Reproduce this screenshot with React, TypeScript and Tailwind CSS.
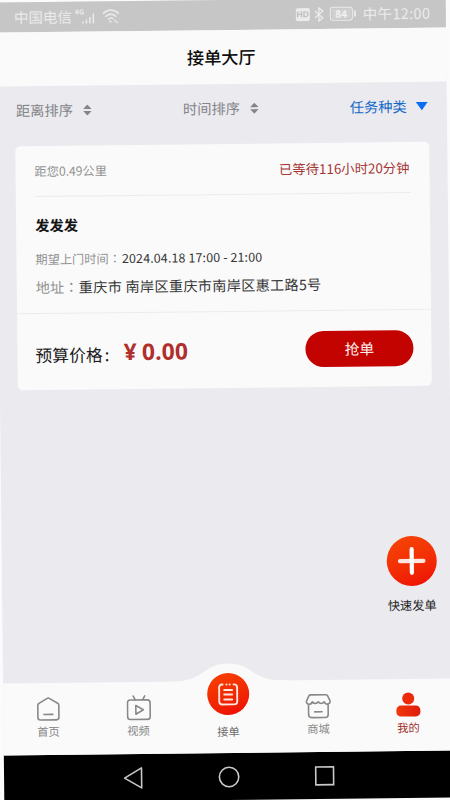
import type { ReactNode } from "react";

function StatusBar() {
  return (
    <div className="flex h-[30px] items-center bg-[#c6c6c6] pl-[18px] pr-[15.500px] text-[#ebebeb]">
      <span className="text-[14.5px] leading-none">中国电信</span>
      <span className="ml-[3px] mb-[9px] text-[7px] font-bold leading-none">4G</span>
      <svg className="-ml-[2px] mt-px" width="13" height="14" viewBox="0 0 13 14" stroke="currentColor" strokeWidth="1.5">
        <path d="M1 13v-2M4.500 13V9M8 13V6.500M11.500 13V3" />
      </svg>
      <svg className="ml-[7px]" width="18" height="16" viewBox="0 0 18 16" fill="none" stroke="currentColor" strokeWidth="1.5">
        <path d="M1 5.500C6 .7 12 .7 17 5.500M3.500 8.500C7 5.200 11 5.200 14.500 8.500M6 11.200c2-1.700 4-1.700 5.500-.4" />
        <path d="M7.500 13.300h2" strokeWidth="2" />
        <path d="m12 13 1-1.500L14 13zM14 13.500h2l-1 1.500z" fill="currentColor" strokeWidth=".5" />
      </svg>
      <span className="ml-auto flex h-[13px] w-[14px] items-center justify-center rounded-[2px] bg-[#ebebeb] font-['Liberation_Sans',sans-serif] text-[8.500px] font-bold leading-none text-[#bdbdbd]">HD</span>
      <svg className="ml-[4px]" width="11" height="15" viewBox="0 0 11 15" fill="none" stroke="currentColor" strokeWidth="1.3">
        <path d="m1 4 8 7-4 3V1l4 3-8 7" />
      </svg>
      <span className="ml-[5px] flex h-[14px] w-[23px] items-center justify-center rounded-[3px] border-[1.500px] border-[#ebebeb] p-px text-[10px] font-bold leading-none text-[#f2f2f2]">
        <span className="flex h-full w-full items-center justify-center bg-[#d0d0d0]">84</span>
      </span>
      <span className="ml-[1.500px] h-[6px] w-[1.500px] bg-[#ebebeb]" />
      <span className="ml-[7px] text-[14.5px] leading-none tracking-[0.35px]">中午12:00</span>
    </div>
  );
}

function SortArrows() {
  return (
    <svg className="mt-px" width="9" height="11" viewBox="0 0 9 11" fill="#858589">
      <path d="M4.500 0 8.700 4.500H.3zM4.500 11 8.700 6.500H.3z" />
    </svg>
  );
}

function FilterBar() {
  return (
    <div className="flex h-[48px] items-center pl-[19px] pr-[19px] text-[14.3px] leading-none text-[#858589]">
      <div className="flex w-[167px] items-center gap-[9.500px]">
        <span>距离排序</span>
        <SortArrows />
      </div>
      <div className="flex items-center gap-[9.500px]">
        <span>时间排序</span>
        <SortArrows />
      </div>
      <div className="ml-auto flex items-center gap-[9px] text-[#1469c7]">
        <span>任务种类</span>
        <svg className="mt-px" width="12" height="9" viewBox="0 0 12 9" fill="#0b6ef0">
          <path d="M0 0h12L6 8.500z" />
        </svg>
      </div>
    </div>
  );
}

function Colon() {
  return <span className="font-['Noto_Sans_CJK_TC',sans-serif]" lang="zh-TW">：</span>;
}

function OrderCard() {
  return (
    <section className="mx-[18px] mt-[12px] h-[244px] rounded-[5px] bg-[#fafafa]">
      <div className="mx-[19px] flex h-[51px] items-center justify-between border-b border-[#ececec] leading-none">
        <span className="text-[12.2px] text-[#929292]">距您0.49公里</span>
        <span className="mr-[1px] mt-[2px] text-[13.3px] tracking-[0.04px] text-[#a43735]">已等待116小时20分钟</span>
      </div>
      <div className="h-[117px] border-b border-[#ececec] px-[19px] pt-[20px]">
        <h2 className="text-[14.3px] font-bold leading-[16px] text-[#141414]">发发发</h2>
        <div className="mt-[19px] flex h-[14px] items-center leading-none">
          <span className="w-[86.500px] whitespace-nowrap text-[12.2px] text-[#929292]">期望上门时间<Colon /></span>
          <span className="whitespace-nowrap text-[12.5px] tracking-[0.11px] text-[#363636]">2024.04.18 17:00 - 21:00</span>
        </div>
        <div className="mt-[13px] flex h-[16px] items-center text-[14.2px] leading-none">
          <span className="w-[43px] whitespace-nowrap text-[#929292]">地址<Colon /></span>
          <span className="whitespace-nowrap tracking-[0.26px] text-[#363636]">重庆市 南岸区重庆市南岸区惠工路5号</span>
        </div>
      </div>
      <div className="flex h-[76px] items-center pl-[18px] pr-[18px] leading-none">
        <span className="mt-[6px] text-[16.800px] text-[#1c1c1c]">预算价格<span className="ml-[2px]">:</span></span>
        <span className="ml-[14.500px] mt-[2px] font-['Noto_Sans',sans-serif] text-[22.800px] font-bold tracking-[0.15px] text-[#b02e2b]">
          <span className="mr-[5px]">¥</span>0.00
        </span>
        <button className="ml-auto h-[36px] w-[108px] rounded-full bg-[#c30300] text-[14.8px] leading-none text-[#fbeeee]">抢单</button>
      </div>
    </section>
  );
}

function QuickPost() {
  return (
    <div className="absolute left-[380px] top-[538px] flex w-[60px] flex-col items-center">
      <div className="flex h-[50px] w-[50px] items-center justify-center rounded-full bg-linear-160 from-[#f74605] to-[#ee0205]">
        <svg width="28" height="28" viewBox="0 0 28 28" stroke="#fff" strokeWidth="4.200" strokeLinecap="round">
          <path d="M2.200 14h23.600" stroke="#ffe6e1" />
          <path d="M14 2.200v23.600" />
        </svg>
      </div>
      <span className="mt-[13px] text-[12.200px] leading-none text-[#242424]">快速发单</span>
    </div>
  );
}

function Tab({ label, color, children }: { label: string; color: string; children: ReactNode }) {
  return (
    <div className={"flex w-[90px] flex-col items-center pt-[13px] " + color}>
      <div className="flex h-[26px] items-center">{children}</div>
      <span className="mt-[4.200px] text-[11.300px] leading-none">{label}</span>
    </div>
  );
}

function TabBar() {
  return (
    <nav className="relative flex h-[72px] bg-[#fafafa]">
      <svg className="absolute left-[165px] top-[-18px]" width="120" height="19" viewBox="0 0 120 19" fill="#fafafa">
        <path d="M0 19v-1c16 0 24-1.500 34-8C43 4 48 .5 60 .5S77 4 86 10c10 6.500 18 8 34 8v1z" />
      </svg>
      <Tab label="首页" color="text-[#888888]">
        <svg width="24" height="26" viewBox="0 0 24 26" fill="none" stroke="currentColor" strokeWidth="1.6" strokeLinecap="round" strokeLinejoin="round">
          <path d="M1.500 9.200Q1.500 8 2.600 7.400L11 2.400q1-.6 2 0l8.400 5q1.100.6 1.100 1.800V21.500q0 2.500-2.500 2.500H4q-2.500 0-2.500-2.500zM7.500 18.500h9" />
        </svg>
      </Tab>
      <Tab label="视频" color="text-[#888888]">
        <svg width="25" height="26" viewBox="0 0 25 26" fill="none" stroke="currentColor" strokeWidth="1.6" strokeLinecap="round" strokeLinejoin="round">
          <rect x="1.200" y="5" width="22.600" height="19.500" rx="2.800" />
          <path d="m7 1 2 3.800M18.500 1l-2 3.800M9.500 10.500v8.800l7.500-4.400z" />
        </svg>
      </Tab>
      <div className="relative flex w-[90px] flex-col items-center">
        <div className="mt-[-8px] flex h-[42px] w-[42px] items-center justify-center rounded-full bg-linear-160 from-[#f84000] to-[#ec0003]">
          <svg width="22" height="24" viewBox="0 0 22 24" fill="none" stroke="#ffe6e1" strokeWidth="1.900" strokeLinecap="round">
            <path d="M5.500 2.500H5Q2 2.500 2 5.500v14q0 3 3 3h12q3 0 3-3v-14q0-3-3-3h-.5M9.300 2.500h.2M12.500 2.500h.2M7 8h8M7 12.500h8M7 17.500h8" />
          </svg>
        </div>
        <span className="mt-[11.200px] text-[11.300px] leading-none text-[#6d6d6d]">接单</span>
      </div>
      <Tab label="商城" color="text-[#888888]">
        <svg width="26" height="26" viewBox="0 0 26 26" fill="none" stroke="currentColor" strokeWidth="1.6" strokeLinecap="round" strokeLinejoin="round">
          <path d="M5.300 1.800h15.400q1.100 0 1.600.9l2.500 5.300c.5 1.600-.8 3.200-2.600 3.200-1.600 0-2.700-1-3.200-2.400-.8 1-1.700 1.700-3 1.700S13.700 9.800 13 8.800c-.7 1-1.700 1.700-3 1.700s-2.200-.7-3-1.700c-.5 1.400-1.600 2.400-3.200 2.400-1.800 0-3.100-1.600-2.600-3.200l2.500-5.300q.5-.9 1.600-.9zM3.200 11.200V21.500q0 3 3 3h13.600q3 0 3-3V11.200M9.300 18.800h7.400" />
        </svg>
      </Tab>
      <Tab label="我的" color="text-[#9f302b]">
        <svg width="26" height="26" viewBox="0 0 26 26">
          <defs>
            <linearGradient id="person" x1="0" y1="0" x2="1" y2="0">
              <stop stopColor="#f1380a" />
              <stop offset="1" stopColor="#e01c0c" />
            </linearGradient>
          </defs>
          <circle cx="13" cy="6.500" r="6" fill="#ec2a0a" />
          <rect x="1" y="13.500" width="24" height="11" rx="4.500" fill="url(#person)" />
        </svg>
      </Tab>
    </nav>
  );
}

function SystemNav() {
  return (
    <div className="flex h-[47px] items-center justify-center gap-[72px] bg-black">
      <svg width="24" height="24" viewBox="0 0 24 24" fill="none" stroke="#c8c8c8" strokeWidth="1.600" strokeLinejoin="round">
        <path d="M20.500 2v20L3.500 12z" />
      </svg>
      <svg width="24" height="24" viewBox="0 0 24 24" fill="none" stroke="#c8c8c8" strokeWidth="1.600">
        <circle cx="12" cy="12" r="9.700" />
      </svg>
      <svg width="24" height="24" viewBox="0 0 24 24" fill="none" stroke="#c8c8c8" strokeWidth="1.600">
        <rect x="2.700" y="3" width="17.800" height="17.800" />
      </svg>
    </div>
  );
}

export default function App() {
  return (
    <div className="h-[800px] w-[450px] overflow-hidden bg-[#fbfbfc] font-['Noto_Sans_CJK_SC',sans-serif]">
      <main className="relative flex h-[800px] w-[450px] rotate-[-0.62deg] flex-col bg-[#ebeaef]">
        <StatusBar />
        <header className="flex h-[54px] items-center justify-center bg-[#fafafa] text-[17.200px] font-medium leading-none text-[#0d0d0d]">接单大厅</header>
        <FilterBar />
        <OrderCard />
        <QuickPost />
        <div className="mt-auto">
          <TabBar />
          <SystemNav />
        </div>
      </main>
    </div>
  );
}
